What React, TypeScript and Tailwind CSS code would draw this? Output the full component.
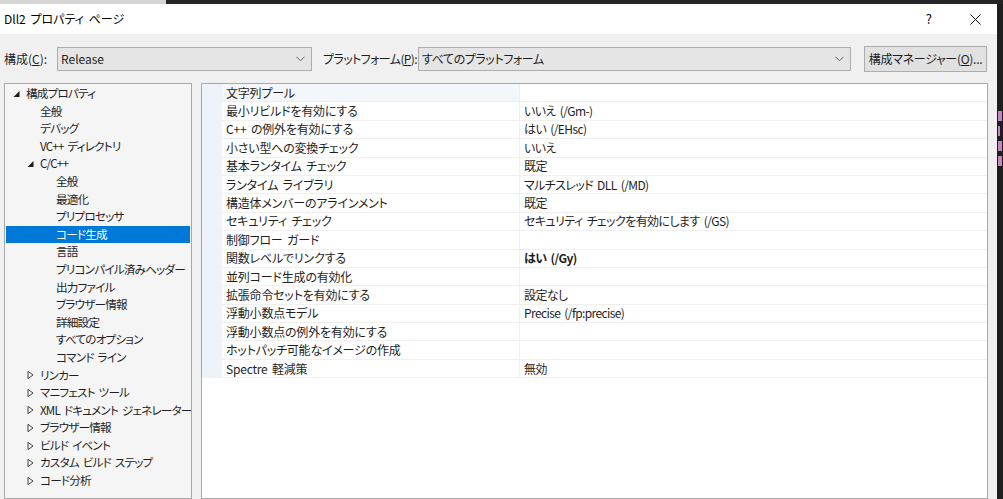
import React from 'react';

const FONT = { fontFamily: '"Noto Sans CJK JP", "Noto Sans", sans-serif' };

type TreeItem = { label: string; level: number; toggle?: 'open' | 'closed'; selected?: boolean };

const tree: TreeItem[] = [
  { label: '構成プロパティ', level: 0, toggle: 'open' },
  { label: '全般', level: 1 },
  { label: 'デバッグ', level: 1 },
  { label: 'VC++ ディレクトリ', level: 1 },
  { label: 'C/C++', level: 1, toggle: 'open' },
  { label: '全般', level: 2 },
  { label: '最適化', level: 2 },
  { label: 'プリプロセッサ', level: 2 },
  { label: 'コード生成', level: 2, selected: true },
  { label: '言語', level: 2 },
  { label: 'プリコンパイル済みヘッダー', level: 2 },
  { label: '出力ファイル', level: 2 },
  { label: 'ブラウザー情報', level: 2 },
  { label: '詳細設定', level: 2 },
  { label: 'すべてのオプション', level: 2 },
  { label: 'コマンド ライン', level: 2 },
  { label: 'リンカー', level: 1, toggle: 'closed' },
  { label: 'マニフェスト ツール', level: 1, toggle: 'closed' },
  { label: 'XML ドキュメント ジェネレーター', level: 1, toggle: 'closed' },
  { label: 'ブラウザー情報', level: 1, toggle: 'closed' },
  { label: 'ビルド イベント', level: 1, toggle: 'closed' },
  { label: 'カスタム ビルド ステップ', level: 1, toggle: 'closed' },
  { label: 'コード分析', level: 1, toggle: 'closed' },
];

const props: { name: string; value: string; bold?: boolean }[] = [
  { name: '文字列プール', value: '' },
  { name: '最小リビルドを有効にする', value: 'いいえ (/Gm-)' },
  { name: 'C++ の例外を有効にする', value: 'はい (/EHsc)' },
  { name: '小さい型への変換チェック', value: 'いいえ' },
  { name: '基本ランタイム チェック', value: '既定' },
  { name: 'ランタイム ライブラリ', value: 'マルチスレッド DLL (/MD)' },
  { name: '構造体メンバーのアラインメント', value: '既定' },
  { name: 'セキュリティ チェック', value: 'セキュリティ チェックを有効にします (/GS)' },
  { name: '制御フロー ガード', value: '' },
  { name: '関数レベルでリンクする', value: 'はい (/Gy)', bold: true },
  { name: '並列コード生成の有効化', value: '' },
  { name: '拡張命令セットを有効にする', value: '設定なし' },
  { name: '浮動小数点モデル', value: 'Precise (/fp:precise)' },
  { name: '浮動小数点の例外を有効にする', value: '' },
  { name: 'ホットパッチ可能なイメージの作成', value: '' },
  { name: 'Spectre 軽減策', value: '無効' },
];

function Chevron() {
  return (
    <svg width="9" height="6" viewBox="0 0 9 6" className="shrink-0">
      <path d="M0.5 0.8 L4.5 4.8 L8.5 0.8" fill="none" stroke="#606060" strokeWidth="1" />
    </svg>
  );
}

function Toggle({ kind }: { kind: 'open' | 'closed' }) {
  if (kind === 'open') {
    return (
      <svg width="7" height="7" viewBox="0 0 7 7">
        <path d="M6.5 0.5 L6.5 6.5 L0.5 6.5 Z" fill="#1e1e1e" />
      </svg>
    );
  }
  return (
    <svg width="7" height="9" viewBox="0 0 7 9">
      <path d="M1 0.8 L6 4.5 L1 8.2 Z" fill="none" stroke="#404040" strokeWidth="1" />
    </svg>
  );
}

export default function App() {
  return (
    <div
      className="w-[1003px] h-[499px] overflow-hidden bg-[#1e1e1e] flex flex-col text-[12px] text-[#1e1e1e] [font-feature-settings:'palt'] [word-spacing:2px]"
      style={FONT}
    >
      <div className="h-[4px] flex shrink-0">
        <div className="w-[166px] bg-[#d4d4d4]" />
        <div className="flex-1 bg-[#252526]" />
      </div>
      <div className="flex flex-1 min-h-0">
        <div className="w-[997px] flex flex-col bg-[#f0f0f0] shrink-0">
          {/* title bar */}
          <div className="h-[30px] bg-white flex items-center shrink-0">
            <span className="pl-[4px] text-[12px] text-black whitespace-nowrap">Dll2 プロパティ ページ</span>
            <span className="ml-auto mr-[38px] text-[13px] text-black">?</span>
            <svg width="11" height="11" viewBox="0 0 11 11" className="mr-[16px]">
              <path d="M0.5 0.5 L10.5 10.5 M10.5 0.5 L0.5 10.5" stroke="#111" strokeWidth="1" />
            </svg>
          </div>
          {/* toolbar */}
          <div className="h-[49px] flex items-center shrink-0 pl-[4px] whitespace-nowrap">
            <span className="w-[53px] shrink-0">構成(<u>C</u>):</span>
            <div className="w-[255px] shrink-0 h-[24px] bg-[#e5e5e5] border border-[#adadad] flex items-center pl-[3px] pr-[6px]">
              <span className="flex-1">Release</span>
              <Chevron />
            </div>
            <span className="ml-[11px] w-[95px] shrink-0 tracking-[-0.6px]">プラットフォーム(<u>P</u>):</span>
            <div className="w-[433px] shrink-0 h-[24px] bg-[#e5e5e5] border border-[#adadad] flex items-center pl-[3px] pr-[6px]">
              <span className="flex-1 tracking-[-0.4px]">すべてのプラットフォーム</span>
              <Chevron />
            </div>
            <div className="ml-[13px] w-[123px] shrink-0 h-[26px] bg-[#e1e1e1] border border-[#adadad] flex items-center justify-center tracking-[-0.3px]">
              構成マネージャー(<u>O</u>)...
            </div>
          </div>
          {/* panels */}
          <div className="flex flex-1 min-h-0 pl-[4px] pr-[9px]">
            <div className="w-[188px] shrink-0 border border-[#a8a8a8] bg-[#f5f5f5] pt-[1px] overflow-hidden">
              {tree.map((t, i) => (
                <div
                  key={i}
                  className={`h-[17.6px] flex items-center mx-[1px] whitespace-nowrap ${t.selected ? 'bg-[#0078d7] text-white' : ''}`}
                >
                  <div className={`shrink-0 ${t.level === 0 ? 'w-[20px]' : t.level === 1 ? 'w-[34px]' : 'w-[50px]'}`} />
                  <div className="relative shrink-0">
                    {t.toggle && (
                      <span className="absolute right-[6px] top-1/2 -translate-y-1/2 flex">
                        <Toggle kind={t.toggle} />
                      </span>
                    )}
                  </div>
                  <span className="leading-none text-[11.6px] tracking-[-0.8px]">{t.label}</span>
                </div>
              ))}
            </div>
            <div className="w-[9px] shrink-0" />
            <div className="flex-1 border border-[#a8a8a8] bg-white overflow-hidden">
              {props.map((p, i) => (
                <div key={i} className="h-[18.4px] flex whitespace-nowrap">
                  <div className="w-[20px] bg-[#eef2f9] shrink-0" />
                  <div
                    className={`w-[297px] shrink-0 flex items-center pl-[4px] border-b border-[#f0f0f0] ${i === 0 ? 'bg-[#f3f6fb]' : ''}`}
                  >
                    <span className="leading-none tracking-[-0.2px]">{p.name}</span>
                  </div>
                  <div className="flex-1 flex items-center pl-[4px] border-b border-l border-[#f0f0f0]">
                    <span className={`leading-none tracking-[-0.6px] ${p.bold ? 'font-bold' : ''}`}>{p.value}</span>
                  </div>
                </div>
              ))}
            </div>
          </div>
        </div>
        <div className="flex-1 bg-[#1e1e1e] flex flex-col pt-[107px] gap-[5px] pl-[1px]">
          <div className="h-[10px] w-[4px] bg-[#c586c0]" />
          <div className="h-[10px] w-[2px] bg-[#c586c0]" />
          <div className="h-[10px] w-[4px] bg-[#c586c0]" />
          <div className="h-[10px] w-[4px] bg-[#c586c0]" />
        </div>
      </div>
    </div>
  );
}
